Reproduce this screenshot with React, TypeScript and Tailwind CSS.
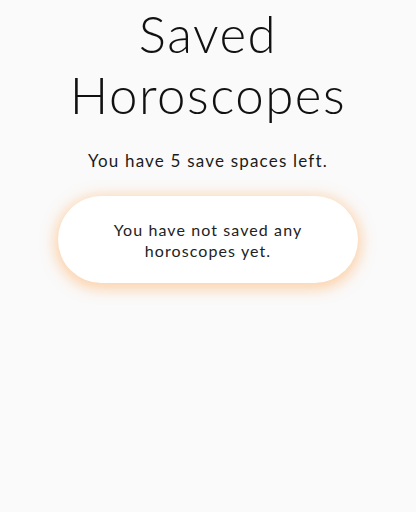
import React from 'react';

export default function App() {
  return (
    <div className="w-[416px] h-[512px] bg-[#fafafa] flex flex-col items-center font-['Lato','Noto_Sans',sans-serif] text-[#111]">
      <h1 className="mt-[3px] text-[51px] leading-[61px] font-light text-center tracking-[1.5px]">
        Saved
        <br />
        Horoscopes
      </h1>
      <p className="mt-[25px] text-[17px] leading-[22px] font-normal tracking-[1.2px] text-[#1a1a1a]">
        You have 5 save spaces left.
      </p>
      <div className="mt-[24px] w-[300px] h-[87px] rounded-full bg-white shadow-[0_3px_14px_3px_rgba(255,170,90,0.5)] flex items-center justify-center">
        <p className="text-[16px] leading-[21px] font-normal tracking-[1.1px] text-center text-[#222]">
          You have not saved any
          <br />
          horoscopes yet.
        </p>
      </div>
    </div>
  );
}
